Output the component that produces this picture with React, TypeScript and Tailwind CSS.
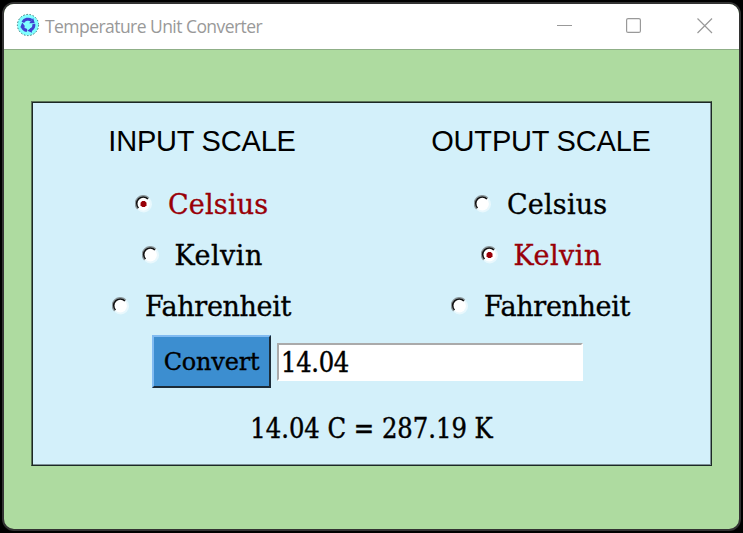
import React from 'react';

const wideSlab = "font-['DejaVu_Serif',serif] [-webkit-text-stroke:0.35px_currentColor]";
const slab = "font-['DejaVu_Serif_Condensed','DejaVu_Serif',serif] [font-stretch:condensed] [-webkit-text-stroke:0.4px_currentColor]";

function Radio({ checked }: { checked: boolean }) {
  return (
    <svg width="18" height="18" viewBox="0 0 18 18" className="shrink-0">
      <circle cx="8.7" cy="9.2" r="8.3" fill="#e9f8fd" />
      <circle cx="8.3" cy="8.8" r="6.6" fill="#fff" />
      <path d="M2.6 14A7.4 7.4 0 0 1 13.8 3" fill="none" stroke="#8d999d" strokeWidth="1.4" />
      <path d="M3.5 13A6.2 6.2 0 0 1 12.9 4" fill="none" stroke="#111" strokeWidth="1.6" />
      {checked && <path d="M7 5.4h3l2 2v3l-2 2H7l-2-2v-3z" fill="#990008" transform="translate(1.3 1.4) scale(.85)" />}
    </svg>
  );
}

const units = [
  { name: 'Celsius', width: 'w-[101px]', tracking: 'tracking-[0.2px]' },
  { name: 'Kelvin', width: 'w-[88px]', tracking: 'tracking-[0.5px]' },
  { name: 'Fahrenheit', width: 'w-[147px]', tracking: 'tracking-[-0.35px]' },
];

function Scale({ title, selected, width }: { title: string; selected: string; width: string }) {
  return (
    <section className={`flex flex-col items-center ${width}`}>
      <h2 className="flex h-[76px] items-center whitespace-nowrap pt-[3px] font-['Liberation_Sans',sans-serif] text-[29px] leading-none tracking-[-0.2px]">
        {title}
      </h2>
      {units.map((u) => (
        <label key={u.name} className={`flex h-[51px] items-center gap-[15px] ${u.name === selected ? 'text-[#990008]' : 'text-black'}`}>
          <Radio checked={u.name === selected} />
          <span className={`whitespace-nowrap pt-px text-[27px] leading-none ${wideSlab} ${u.width} ${u.tracking}`}>{u.name}</span>
        </label>
      ))}
    </section>
  );
}

export default function App() {
  return (
    <div className="h-[533px] w-[743px] overflow-hidden bg-black p-[2px] text-black">
      <div className="h-[529px] w-[739px] overflow-hidden rounded-[12px] border-2 border-[#333] bg-[#aedba0]">
        <header className="flex h-[46px] items-center border-b border-[#8faf87] bg-white">
          <svg width="24" height="24" viewBox="0 0 24 24" className="mb-[3px] ml-[12px] shrink-0">
            <circle cx="12" cy="12" r="10.6" fill="#80ffff" stroke="#397777" strokeWidth="1" strokeDasharray="1.5 1.7" />
            <g fill="none" stroke="#4040d0" strokeWidth="3">
              <path d="M6.8 9.2A6 6 0 0 1 15.5 7.3" />
              <path d="M17.8 11A6 6 0 0 1 14.5 17.2" />
              <path d="M11 17.6A6 6 0 0 1 6.2 13.4" />
            </g>
            <path d="M13.2 10.2 18.7 10.3 17.2 5ZM15.5 14.4 11.3 17.8 16 19.8ZM9.2 13.4 6.2 9.4 4.3 14.5Z" fill="#4040d0" />
          </svg>
          <span className="ml-[5px] whitespace-nowrap font-['Open_Sans','Noto_Sans',sans-serif] text-[17.5px] leading-none tracking-[-0.55px] text-[#999]">
            Temperature Unit Converter
          </span>
          <svg width="160" height="18" viewBox="0 0 160 18" fill="none" stroke="#999" strokeWidth="1.2" className="mr-[26px] mb-[4px] ml-auto">
            <path d="M4 9.5h15" />
            <rect x="73.6" y="2.6" width="13.8" height="13.8" rx="1.5" />
            <path d="m144.5 2.5 14.5 14.5m0-14.5-14.5 14.5" />
          </svg>
        </header>
        <main className="mt-[51px] ml-[27px] h-[365px] w-[681px] border border-t-[#5c7457] border-r-[#1c2925] border-b-[#1c2925] border-l-[#5c7457] bg-[#d3f0fa] shadow-[inset_1px_1px_0_#1c2925,inset_-1px_-1px_0_#7d9096]">
          <div className="flex">
            <Scale title="INPUT SCALE" selected="Celsius" width="w-[340px]" />
            <Scale title="OUTPUT SCALE" selected="Kelvin" width="w-[338px]" />
          </div>
          <form className="mt-[4px] ml-[120px] flex items-center gap-[6px]">
            <button type="button" className={`h-[53px] w-[119px] border-2 border-t-[#81bbf1] border-r-[#1c2b37] border-b-[#1c2b37] border-l-[#81bbf1] bg-[#3c8ed0] text-[24px] leading-none tracking-[-0.2px] whitespace-nowrap ${wideSlab}`}>
              Convert
            </button>
            <input
              readOnly
              value="14.04"
              className={`h-[38px] w-[306px] border-2 border-t-[#aaa] border-r-white border-b-white border-l-[#aaa] bg-white pt-[2px] pl-[2px] text-[27px] leading-none tracking-[-0.3px] outline-none ${slab}`}
            />
          </form>
          <p className={`mt-[27px] text-center text-[27px] leading-none whitespace-nowrap ${slab}`}>14.04 C = 287.19 K</p>
        </main>
      </div>
    </div>
  );
}
